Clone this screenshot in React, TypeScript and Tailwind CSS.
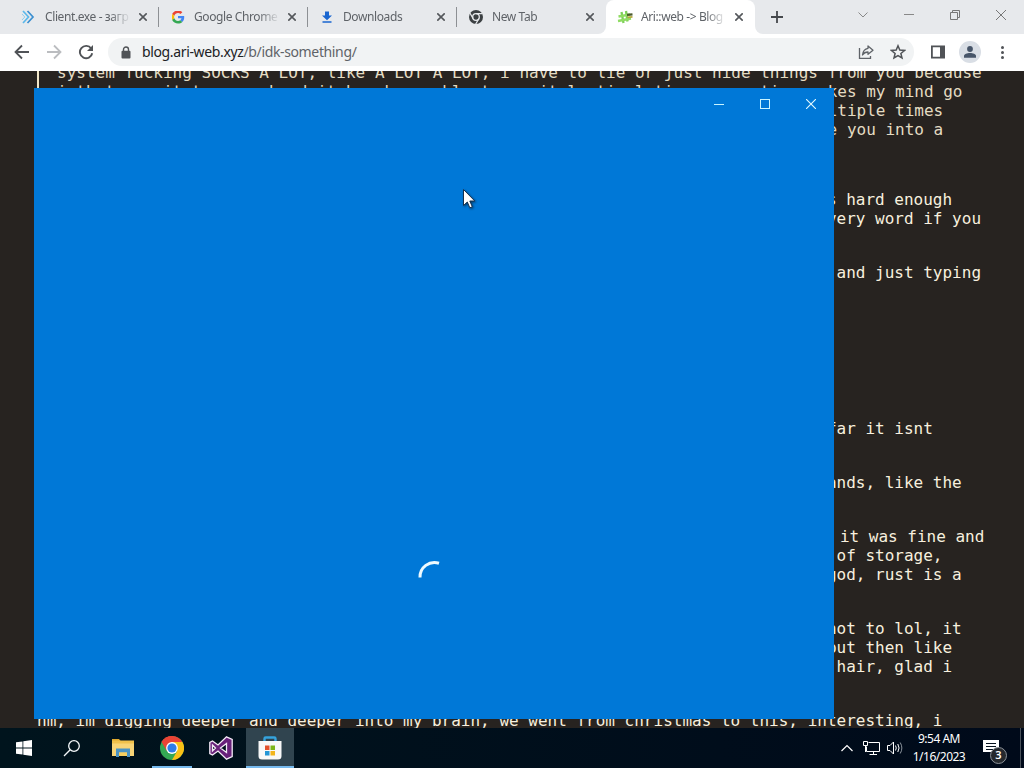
import React from 'react';
import clsx from 'clsx';

interface TabProps {
  title: string;
  icon: React.ReactNode;
  active?: boolean;
  separator?: boolean;
}

interface Row {
  col: number;
  text: string;
  gap?: string;
}

const quoteRows: Row[] = [
  { col: 0, text: 'system fucking SOCKS A LOT, like A LOT A LOT, i have to lie or just hide things from you because' },
  { col: 0, text: 'i that one it to some hard it has been able to a vital stimulation now action makes my mind go' },
  { col: 78, text: 'multiple times' },
  { col: 77, text: 'make you into a' },
];

const postRows: Row[] = [
  { col: 81, text: 'is hard enough', gap: 'mt-[51px]' },
  { col: 81, text: 'every word if you' },
  { col: 83, text: 'and just typing', gap: 'mt-[35px]' },
  { col: 82, text: 'far it isnt', gap: 'mt-[137px]' },
  { col: 81, text: 'hands, like the', gap: 'mt-[35px]' },
  { col: 83.35, text: 'it was fine and', gap: 'mt-[35px]' },
  { col: 83, text: 'of storage,' },
  { col: 82, text: 'god, rust is a' },
  { col: 82, text: 'not to lol, it', gap: 'mt-[35px]' },
  { col: 82, text: 'but then like' },
  { col: 83, text: 'hair, glad i' },
  { col: 0, text: 'hm, im digging deeper and deeper into my brain, we went from christmas to this, interesting, i', gap: 'mt-[35px]' },
];

const TextRow: React.FC<{ row: Row }> = ({ row }) => (
  <div className={clsx('h-[19px] whitespace-pre', row.gap)} style={{ paddingLeft: `${row.col}ch` }}>
    {row.text}
  </div>
);

const CloseIcon = () => (
  <svg width="8" height="8" viewBox="0 0 8 8" stroke="#54575b" strokeWidth="1.6">
    <path d="M0.3 0.3L7.7 7.7M7.7 0.3L0.3 7.7" />
  </svg>
);

const Tab: React.FC<TabProps> = ({ title, icon, active, separator }) => (
  <div
    className={clsx(
      'flex items-center h-full w-[149px] pl-[11px]',
      active && 'bg-white rounded-t-lg'
    )}
  >
    <div className="w-4 h-4 shrink-0">{icon}</div>
    <span className="ml-2 w-[86px] shrink-0 whitespace-nowrap text-[12px] tracking-[-0.4px] text-[#5f6368] mask-r-from-75%">
      {title}
    </span>
    <div className="ml-2">
      <CloseIcon />
    </div>
    {separator && <div className="ml-auto w-px h-5 bg-[#8d9094]" />}
  </div>
);

const ChevronsLogo = () => (
  <svg width="16" height="16" viewBox="0 0 16 16" fill="none" strokeWidth="1.7">
    <path d="M2 2L7.5 8L2 14" stroke="#5cb8ea" />
    <path d="M6.5 2L12 8L6.500 14" stroke="#3b8fd0" />
    <path d="M1 5L3.800 8L1 11" stroke="#8fcff0" strokeWidth="1" />
  </svg>
);

const GoogleLogo = () => (
  <svg width="16" height="16" viewBox="0 0 48 48" className="p-[1.5px]">
    <path fill="#EA4335" d="M24 9.5c3.54 0 6.71 1.22 9.21 3.6l6.85-6.85C35.9 2.38 30.47 0 24 0 14.62 0 6.51 5.38 2.56 13.22l7.98 6.19C12.43 13.72 17.74 9.5 24 9.5z" />
    <path fill="#4285F4" d="M46.98 24.55c0-1.57-.15-3.09-.38-4.55H24v9.02h12.94c-.58 2.96-2.26 5.48-4.78 7.18l7.73 6c4.51-4.18 7.09-10.36 7.09-17.65z" />
    <path fill="#FBBC05" d="M10.53 28.59A14.5 14.5 0 0 1 9.77 24c0-1.6.27-3.14.76-4.59l-7.98-6.19A23.9 23.9 0 0 0 0 24c0 3.88.92 7.54 2.56 10.78l7.97-6.19z" />
    <path fill="#34A853" d="M24 48c6.48 0 11.93-2.13 15.89-5.81l-7.73-6c-2.15 1.45-4.92 2.3-8.16 2.3-6.26 0-11.57-4.22-13.47-9.91l-7.98 6.19C6.51 42.62 14.62 48 24 48z" />
  </svg>
);

const DownloadIcon = () => (
  <svg width="16" height="16" viewBox="0 0 16 16" fill="#1a66d0">
    <path d="M6 2.5h4v4h3L8 11.300L3 6.500h3zM3.500 12.200h9v1.600h-9z" />
  </svg>
);

const ChromeMono = () => (
  <svg width="16" height="16" viewBox="0 0 16 16" fill="none">
    <circle cx="8" cy="8" r="7" fill="#3c4043" />
    <circle cx="8" cy="8" r="3.3" stroke="#e8eaed" strokeWidth="1.3" />
    <path d="M8 4.7H14.5M5.15 9.65L1.9 4M10.85 9.65L7.6 15.3" stroke="#e8eaed" strokeWidth="1.2" />
  </svg>
);

const HashLogo = () => (
  <svg width="16" height="16" viewBox="0 0 16 16" fill="none">
    <path d="M4.500 3L6.500 14M9 2L10.500 12.500" stroke="#7ccf58" strokeWidth="2.300" />
    <path d="M1.500 7.500L13 5.500M1 12L14 9.500" stroke="#8fdc62" strokeWidth="2.300" />
    <path d="M10 5.800L15.500 5.300" stroke="#4a5a2c" strokeWidth="2.200" />
    <path d="M10.500 8.300L15.500 7.800" stroke="#b5a83b" strokeWidth="1.700" />
  </svg>
);

const TabStrip = () => (
  <div className="flex h-[34px] bg-white">
    <div className="flex bg-[#e7e9ec] pl-[10px] rounded-br-lg">
      <Tab title="Client.exe - загр" icon={<ChevronsLogo />} separator />
      <Tab title="Google Chrome" icon={<GoogleLogo />} separator />
      <Tab title="Downloads" icon={<DownloadIcon />} separator />
      <Tab title="New Tab" icon={<ChromeMono />} />
    </div>
    <div className="bg-linear-to-b from-[#e7e9ec] from-50% to-white to-50%">
      <Tab title="Ari::web -> Blog" icon={<HashLogo />} active />
    </div>
    <div className="flex flex-1 items-center bg-[#e7e9ec] rounded-bl-lg pl-4">
      <svg width="12" height="12" viewBox="0 0 12 12" stroke="#45484c" strokeWidth="1.8">
        <path d="M6 0V12M0 6H12" />
      </svg>
      <div className="ml-auto flex h-[34px] items-center pb-[5px]">
        <div className="w-[46px] flex justify-center">
          <svg width="10" height="6" viewBox="0 0 10 6" fill="none" stroke="#888"><path d="M0.5 0.5L5 5L9.5 0.5" /></svg>
        </div>
        <div className="w-[46px] flex justify-center">
          <div className="w-[10px] h-px bg-[#888]" />
        </div>
        <div className="w-[46px] flex justify-center">
          <svg width="10" height="10" viewBox="0 0 10 10" fill="none" stroke="#777"><path d="M0.5 2.5H7.5V9.5H0.5zM2.5 2.5V0.5H9.5V7.5H7.5" /></svg>
        </div>
        <div className="w-[46px] flex justify-center">
          <svg width="10" height="10" viewBox="0 0 10 10" stroke="#777"><path d="M0 0L10 10M10 0L0 10" /></svg>
        </div>
      </div>
    </div>
  </div>
);

const Toolbar = () => (
  <div className="flex h-[37px] items-center bg-white pb-px pl-[14px]">
    <svg width="16" height="16" viewBox="0 0 16 16" fill="none" stroke="#505357" strokeWidth="1.8">
      <path d="M15 8H2M8 1.5L1.5 8L8 14.5" />
    </svg>
    <svg className="ml-4" width="16" height="16" viewBox="0 0 16 16" fill="none" stroke="#bbbdc0" strokeWidth="1.8">
      <path d="M1 8H14M8 1.5L14.5 8L8 14.5" />
    </svg>
    <svg className="ml-4" width="16" height="16" viewBox="0 0 16 16" fill="none">
      <path d="M13.2 4.5A6.2 6.2 0 1 0 14.2 9.2" stroke="#505357" strokeWidth="1.9" />
      <path d="M15 1V7H9z" fill="#505357" />
    </svg>
    <div className="ml-[14px] flex h-7 w-[806px] items-center rounded-full bg-[#f1f3f4] pl-[13px] pr-2">
      <svg width="10" height="13" viewBox="0 0 10 13">
        <path d="M2.5 5V3.5a2.5 2.5 0 0 1 5 0V5" fill="none" stroke="#505357" strokeWidth="1.4" />
        <rect x="0.5" y="4.7" width="9" height="7.8" rx="1" fill="#505357" />
      </svg>
      <span className="ml-[11px] text-[14px] leading-5 tracking-[-0.36px] text-[#5f6368] whitespace-nowrap">
        <span className="text-[#202124]">blog.ari-web.xyz</span>/b/idk-something/
      </span>
      <svg className="ml-auto" width="16" height="16" viewBox="0 0 16 16" fill="none" stroke="#5f6368" strokeWidth="1.3">
        <path d="M1.5 4V14.3H12.5V12" />
        <path d="M10 2L15 6.2L10 10.3V8C7.5 8 5.8 8.9 4.5 11C4.900 7.500 6.800 4.800 10 4.300z" strokeLinejoin="round" />
      </svg>
      <svg className="ml-4" width="16" height="16" viewBox="0 0 16 16" fill="none" stroke="#505357" strokeWidth="1.5">
        <path d="M8 1.8L9.8 6.1L14.5 6.5L10.9 9.5L12 14L8 11.6L4 14L5.1 9.5L1.5 6.5L6.2 6.1z" />
      </svg>
    </div>
    <svg className="ml-[17px]" width="14" height="14" viewBox="0 0 14 14">
      <path d="M0.9 1.4H13.1V12.6H0.9z" fill="none" stroke="#505357" strokeWidth="1.8" />
      <path d="M9 1H13.5V13H9z" fill="#505357" />
    </svg>
    <div className="ml-[14px] flex h-[22px] w-[22px] items-center justify-center rounded-full bg-[#d9dee5]">
      <svg width="14" height="14" viewBox="0 0 14 14" fill="#475569">
        <circle cx="7" cy="4" r="2.9" />
        <path d="M1 12.7V11C1 9 4 8 7 8S13 9 13 11V12.7z" />
      </svg>
    </div>
    <div className="ml-5 flex flex-col gap-[2px]">
      <div className="h-[3px] w-[3px] rounded-full bg-[#505357]" />
      <div className="h-[3px] w-[3px] rounded-full bg-[#505357]" />
      <div className="h-[3px] w-[3px] rounded-full bg-[#505357]" />
    </div>
  </div>
);

const BlogPage = () => (
  <div className="h-[657px] overflow-hidden bg-[#272320] font-['DejaVu_Sans_Mono',monospace] text-[16px] leading-[19px]">
    <div className="-mt-2">
      <div className="ml-[37px] border-l-2 border-[#f0e6c8] pl-[18px] text-[#e4dcc3]">
        {quoteRows.map((row, i) => (
          <TextRow key={i} row={row} />
        ))}
      </div>
      <div className="pl-[37px] text-[#f7f0df]">
        {postRows.map((row, i) => (
          <TextRow key={i} row={row} />
        ))}
      </div>
    </div>
  </div>
);

const SplashWindow = () => (
  <div className="absolute left-[34px] top-[88px] flex h-[631px] w-[800px] flex-col bg-[#0078d7]">
    <div className="flex h-8 justify-end">
      <div className="flex w-[46px] items-center justify-center">
        <div className="h-px w-[10px] bg-[#c8f4ff]" />
      </div>
      <div className="flex w-[46px] items-center justify-center">
        <div className="h-[10px] w-[10px] border border-[#c8f4ff]" />
      </div>
      <div className="flex w-[46px] items-center justify-center">
        <svg width="10" height="10" viewBox="0 0 10 10" stroke="#e4f9ff" strokeWidth="1.1"><path d="M0 0L10 10M10 0L0 10" /></svg>
      </div>
    </div>
    <svg className="mt-auto mb-[124px] self-center" width="36" height="36" viewBox="0 0 36 36" fill="none" stroke="#eefaff" strokeWidth="3">
      <path d="M4 18.5A14.5 14.5 0 0 1 23 4.2" />
    </svg>
  </div>
);

const WindowsLogo = () => (
  <svg width="16" height="16" viewBox="0 0 16 16" fill="#fff">
    <path d="M0 2.3L6.5 1.4V7.6H0zM7.3 1.3L16 0V7.6H7.3zM0 8.4H6.5V14.6L0 13.7zM7.3 8.4H16V16L7.3 14.7z" />
  </svg>
);

const SearchIcon = () => (
  <svg width="18" height="18" viewBox="0 0 18 18" fill="none" stroke="#f4f8fa" strokeWidth="1.3">
    <circle cx="11" cy="7" r="5.3" />
    <path d="M7.2 10.8L1 17" />
  </svg>
);

const FolderIcon = () => (
  <svg width="22" height="20" viewBox="0 0 22 20">
    <path d="M0 1H7L9 3.5H0z" fill="#e0a92e" />
    <path d="M0 2.5H22V18H0z" fill="#f0c14c" />
    <path d="M0 5.5H22V18H0z" fill="#f8d476" />
    <path d="M4 10.5H18V19H15V14.5H7V19H4z" fill="#4a93c4" />
    <path d="M7 14.5H15V18H7z" fill="#f7cf60" />
  </svg>
);

const ChromeLogo = () => (
  <svg width="24" height="24" viewBox="0 0 24 24">
    <circle cx="12" cy="12" r="12" fill="#34a853" />
    <path d="M12 12L1.6 6A12 12 0 0 1 22.4 6z" fill="#ea4335" />
    <path d="M12 6H22.4A12 12 0 0 1 12 24L17.2 15z" fill="#fbc116" />
    <path d="M1.6 6A12 12 0 0 1 12 0V6L6.8 15z" fill="#ea4335" />
    <circle cx="12" cy="12" r="5.9" fill="#fff" />
    <circle cx="12" cy="12" r="4.6" fill="#2f7de9" />
  </svg>
);

const VisualStudioIcon = () => (
  <svg width="24" height="24" viewBox="0 0 24 24">
    <path
      fillRule="evenodd"
      d="M17.5 0.8L23.2 3.5V20.5L17.5 23.2L9 15L3.5 19L0.8 17.5V6.5L3.5 5L9 9L17.5 0.8zM17.5 7.5L11.500 12L17.500 16.500zM3.500 9V15L6.500 12z"
      fill="#68217a"
      stroke="#f3eaf6"
      strokeWidth="1.3"
    />
  </svg>
);

const StoreIcon = () => (
  <svg width="24" height="24" viewBox="0 0 24 24">
    <path d="M6.5 6V2.7Q6.5 1.5 7.7 1.5H16.3Q17.5 1.5 17.5 2.7V6" fill="none" stroke="#35a3dd" strokeWidth="2.4" />
    <path d="M0.5 5H23.5V20Q23.5 23.5 20 23.5H4Q0.5 23.5 0.5 20z" fill="#f8f8f8" />
    <path d="M7 9.5H11.5V14H7z" fill="#e2502c" />
    <path d="M12.5 9.5H17V14H12.5z" fill="#7cb518" />
    <path d="M7 15H11.5V19.5H7z" fill="#2496d6" />
    <path d="M12.5 15H17V19.5H12.5z" fill="#f3b51b" />
  </svg>
);

const Taskbar = () => (
  <div className="flex h-10 bg-linear-to-r from-[#00141d] to-[#000a1a] text-white">
    <div className="flex w-12 items-center justify-center"><WindowsLogo /></div>
    <div className="flex w-12 items-center justify-center"><SearchIcon /></div>
    <div className="ml-[3px] flex w-12 items-center justify-center"><FolderIcon /></div>
    <div className="ml-px flex w-12 flex-col items-center">
      <div className="flex flex-1 items-center pt-0.5"><ChromeLogo /></div>
      <div className="h-0.5 w-10 bg-[#76b9ed]" />
    </div>
    <div className="ml-px flex w-12 items-center justify-center"><VisualStudioIcon /></div>
    <div className="ml-px flex w-12 flex-col items-center bg-[#30444f]">
      <div className="flex flex-1 items-center pt-0.5 pr-px"><StoreIcon /></div>
      <div className="h-0.5 w-full bg-[#76b9ed]" />
    </div>

    <div className="ml-auto flex items-center">
      <svg width="12" height="8" viewBox="0 0 12 8" fill="none" stroke="#fff" strokeWidth="1.2">
        <path d="M0.5 7L6 1.5L11.5 7" />
      </svg>
      <svg className="ml-[10px]" width="17" height="16" viewBox="0 0 17 16" fill="none" stroke="#fff">
        <path d="M5.5 2.5H16.5V11.5H3.5V6.5M10.5 11.5V14.5M6.5 14.5H14" />
        <path d="M0.5 1.5H4.5V5.5H0.5zM2.5 5.5V12" />
      </svg>
      <svg className="ml-[7px]" width="17" height="16" viewBox="0 0 17 16" fill="none" stroke="#fff">
        <path d="M0.5 5.5H3L6.5 2V14L3 10.5H0.5z" />
        <path d="M8.5 5.5Q10 8 8.5 10.5M10.8 4Q13.3 8 10.8 12" />
        <path d="M13.2 2.5Q16.5 8 13.2 13.5" stroke="#8b939b" />
      </svg>
      <div className="ml-2 flex w-[54px] flex-col items-center text-[12px] leading-[18px] tracking-[-0.5px] whitespace-nowrap">
        <span>9:54 AM</span>
        <span>1/16/2023</span>
      </div>
      <div className="relative ml-[17px] h-[30px] w-[24px]">
        <svg className="mt-[7px]" width="17" height="17" viewBox="0 0 17 17">
          <path d="M0 0H16V12H12V16L8 12H0z" fill="#fff" />
          <path d="M3 3.5H13M3 6.5H13M3 9.5H10" stroke="#07131f" />
        </svg>
        <div className="absolute left-[7px] top-[14px] flex h-[17px] w-[17px] items-center justify-center rounded-full border border-[#8c9299] bg-[#25292e] text-[11px] font-semibold">
          3
        </div>
      </div>
      <div className="ml-[13px] h-10 w-px bg-[#4a525b]" />
      <div className="w-[3px]" />
    </div>
  </div>
);

const Cursor = () => (
  <svg className="absolute left-[463px] top-[189px] drop-shadow-[1px_1px_1px_rgba(0,0,0,0.5)]" width="13" height="20" viewBox="0 0 13 20">
    <path d="M0.5 0.5V16.5L4.3 13L6.8 18.8L9.3 17.7L6.8 12H11.8z" fill="#fff" stroke="#15304d" />
  </svg>
);

export default function App() {
  return (
    <div className="relative flex h-[768px] w-[1024px] flex-col overflow-hidden font-['Noto_Sans',sans-serif]">
      <TabStrip />
      <Toolbar />
      <BlogPage />
      <Taskbar />
      <SplashWindow />
      <Cursor />
    </div>
  );
}
